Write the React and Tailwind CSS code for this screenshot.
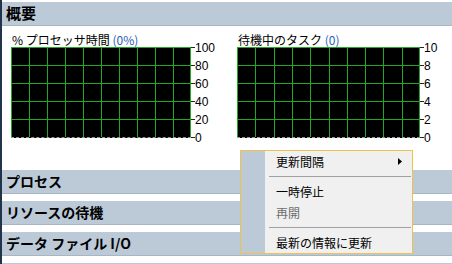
const JP = "font-['Noto_Sans_CJK_JP','Noto_Sans',sans-serif]";

function Chart({ width, labels, title, count }) {
  const cols = 10;
  const rows = 5;
  const h = 90;
  const cw = width / cols;
  return (
    <div className="flex flex-col">
      <div className={`h-[15px] pl-[1px] text-[12px] leading-[15px] text-black ${JP}`}>
        {title} <span className="text-[#2a62b8]">{count}</span>
      </div>
      <div className="flex items-start">
        <div
          className="relative h-[91px] bg-black border-b border-dashed border-[#9a9a9a]"
          style={{ width }}
        >
          {Array.from({ length: cols + 1 }).map((_, i) => (
            <div
              key={"v" + i}
              className="absolute top-0 h-[90px] w-px bg-[#24a824]"
              style={{ left: Math.min(Math.round(i * cw), width - 1) }}
            />
          ))}
          {Array.from({ length: rows }).map((_, i) => (
            <div
              key={"h" + i}
              className="absolute left-0 h-px w-full bg-[#24a824]"
              style={{ top: i * 18 }}
            />
          ))}
        </div>
        <svg width="30" height="91" className="overflow-visible">
          {labels.map((l, i) => (
            <g key={l}>
              <rect x="0" y={i * 18} width="4" height="1" fill="#222" />
              <text
                x="4"
                y={i * 18 + 5}
                fontSize="12"
                fontFamily="Liberation Sans, Arial, sans-serif"
                fill="#000"
              >
                {l}
              </text>
            </g>
          ))}
        </svg>
      </div>
    </div>
  );
}

function Bar({ children, className = "" }) {
  return (
    <div
      className={`flex h-[24px] items-center border-b border-[#a7b5c4] bg-[#bccad8] pl-[4px] text-[14px] font-bold text-black ${JP} ${className}`}
    >
      {children}
    </div>
  );
}

function MenuItem({ children, disabled, arrow }) {
  return (
    <div
      className={`flex h-[21px] items-center justify-between pl-[11px] pr-[10px] text-[12px] ${JP} ${
        disabled ? "text-[#6d6d6d]" : "text-black"
      }`}
    >
      <span>{children}</span>
      {arrow && (
        <svg width="4" height="7" viewBox="0 0 4 7">
          <path d="M0 0 L4 3.5 L0 7 Z" fill="#000" />
        </svg>
      )}
    </div>
  );
}

function Separator() {
  return (
    <div className="flex h-[9px] items-center ml-[4px] mr-[1px]">
      <div className="h-px w-full bg-[#a0a0a0]" />
    </div>
  );
}

export default function App() {
  return (
    <div className="relative h-[264px] w-[452px] overflow-hidden border-l-2 border-[#22344c] bg-white pt-[2px]">
      <Bar className="text-[15px]">概要</Bar>

      <div className="flex h-[144px] pt-[6px]">
        <div className="ml-[9px] w-[215px]">
          <Chart
            width={180}
            title="% プロセッサ時間"
            count="(0%)"
            labels={["100", "80", "60", "40", "20", "0"]}
          />
        </div>
        <div className="ml-[11px] w-[215px]">
          <Chart
            width={183}
            title="待機中のタスク"
            count="(0)"
            labels={["10", "8", "6", "4", "2", "0"]}
          />
        </div>
      </div>

      <div className="flex flex-col gap-[7px]">
        <Bar>プロセス</Bar>
        <Bar>リソースの待機</Bar>
        <Bar>データ ファイル I/O</Bar>
        <Bar />
      </div>

      <div className="absolute left-[238px] top-[150px] flex h-[104px] w-[173px] border border-[#efc24c] bg-[#f0f0f0]">
        <div className="w-[24px] bg-[#bccad8]" />
        <div className="flex flex-1 flex-col">
          <MenuItem arrow>更新間隔</MenuItem>
          <Separator />
          <MenuItem>一時停止</MenuItem>
          <MenuItem disabled>再開</MenuItem>
          <Separator />
          <MenuItem>最新の情報に更新</MenuItem>
        </div>
      </div>
    </div>
  );
}
